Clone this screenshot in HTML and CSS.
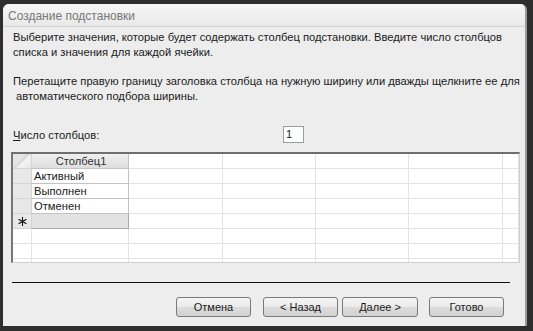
FILE: index.html
```html
<!DOCTYPE html>
<html lang="ru">
<head>
    <meta charset="UTF-8">
    <title>Создание подстановки</title>
    <link rel="stylesheet" href="styles.css">
</head>
<body>
    <div class="window">
        <div class="titlebar">Создание подстановки</div>
        <div class="content">
            <p class="intro">Выберите значения, которые будет содержать столбец подстановки. Введите число столбцов<br>списка и значения для каждой ячейки.</p>
            <p class="intro second">Перетащите правую границу заголовка столбца на нужную ширину или дважды щелкните ее для<br>&nbsp;автоматического подбора ширины.</p>

            <div class="count-row">
                <label for="cols"><u>Ч</u>исло столбцов:</label>
                <div class="count-box" id="cols">1</div>
            </div>

            <div class="grid">
                <div class="cell sel corner"></div>
                <div class="cell head">Столбец1</div>
                <div class="cell"></div><div class="cell"></div><div class="cell"></div><div class="cell"></div><div class="cell"></div>

                <div class="cell sel"></div>
                <div class="cell val">Активный</div>
                <div class="cell"></div><div class="cell"></div><div class="cell"></div><div class="cell"></div><div class="cell"></div>

                <div class="cell sel"></div>
                <div class="cell val">Выполнен</div>
                <div class="cell"></div><div class="cell"></div><div class="cell"></div><div class="cell"></div><div class="cell"></div>

                <div class="cell sel"></div>
                <div class="cell val">Отменен</div>
                <div class="cell"></div><div class="cell"></div><div class="cell"></div><div class="cell"></div><div class="cell"></div>

                <div class="cell sel star">
                    <svg width="9" height="9" viewBox="0 0 9 9"><g stroke="#111" stroke-width="1.1"><line x1="4.5" y1="0" x2="4.5" y2="9"/><line x1="0.6" y1="2.2" x2="8.4" y2="6.8"/><line x1="0.6" y1="6.8" x2="8.4" y2="2.2"/></g></svg>
                </div>
                <div class="cell val newrow"></div>
                <div class="cell"></div><div class="cell"></div><div class="cell"></div><div class="cell"></div><div class="cell"></div>

                <div class="cell"></div><div class="cell"></div><div class="cell"></div><div class="cell"></div><div class="cell"></div><div class="cell"></div><div class="cell"></div>
                <div class="cell"></div><div class="cell"></div><div class="cell"></div><div class="cell"></div><div class="cell"></div><div class="cell"></div><div class="cell"></div>
                <div class="cell"></div><div class="cell"></div><div class="cell"></div><div class="cell"></div><div class="cell"></div><div class="cell"></div><div class="cell"></div>
            </div>

            <div class="sep"></div>

            <div class="buttons">
                <button class="cancel">Отмена</button>
                <button>&lt; Назад</button>
                <button class="next">Далее &gt;</button>
                <button class="done">Готово</button>
            </div>
        </div>
    </div>
</body>
</html>
```

FILE: styles.css
```css
body {
    margin: 0;
    background-color: #2e2e2e;
    font-family: 'Liberation Sans', Arial, sans-serif;
    font-size: 11.2px;
    color: #1a1a1a;
}

.window {
    margin: 4px 0 0 3px;
    width: 524px;
    height: 322px;
    background-color: #ededed;
    border-radius: 6px 6px 0 0;
    box-sizing: border-box;
    border-right: 2px solid #9a9a9a;
    overflow: hidden;
}

.titlebar {
    height: 22px;
    line-height: 24px;
    padding-left: 5px;
    font-size: 12px;
    color: #777;
    background: linear-gradient(#f6f6f6, #e9e9e9);
    border-bottom: 1px solid #d2d2d2;
}

.content {
    padding: 0 0 0 8px;
}

.intro {
    margin: 3px 0 0 2px;
    line-height: 15px;
    white-space: nowrap;
}

.intro.second {
    margin-top: 14px;
}

.count-row {
    display: flex;
    align-items: center;
    margin-top: 22px;
    height: 17px;
    padding-left: 2px;
}

.count-row label {
    width: 270px;
}

.count-box {
    width: 17px;
    height: 15px;
    line-height: 15px;
    padding-left: 2px;
    background-color: #fff;
    border: 1px solid #9c9c9c;
}

.grid {
    margin-top: 9px;
    width: 509px;
    height: 111px;
    box-sizing: border-box;
    display: grid;
    grid-template-columns: 19px 97px 94px 93px 93px 94px 1fr;
    grid-auto-rows: 15px;
    background-color: #fff;
    border-top: 2px solid #6f6f6f;
    border-left: 2px solid #777;
    border-right: 1px solid #cfcfcf;
    border-bottom: 1px solid #cfcfcf;
    overflow: hidden;
}

.cell {
    border-right: 1px solid #e3e3e3;
    border-bottom: 1px solid #e3e3e3;
    line-height: 14px;
    padding-left: 2px;
    white-space: nowrap;
    overflow: hidden;
}

.sel {
    background-color: #e8e8e8;
    border-color: #d4d4d4;
}

.corner {
    background: linear-gradient(135deg, #e4e4e4 45%, #d2d2d2 46%, #f4f4f4 60%, #e6e6e6 100%);
}

.head {
    text-align: center;
    color: #333;
    background: linear-gradient(#efefef, #dedede);
    border-color: #c4c4c4;
}

.val {
    border-color: #c2c2c2;
}

.newrow {
    background-color: #e2e2e2;
    border-color: #a8a8a8;
}

.star {
    display: flex;
    align-items: center;
    justify-content: center;
    padding-left: 0;
}

.sep {
    margin-top: 19px;
    width: 498px;
    height: 1px;
    margin-left: 1px;
    background-color: #111;
}

.buttons {
    display: flex;
    margin-top: 14px;
    padding-left: 165px;
}

button {
    width: 75px;
    height: 20px;
    padding: 0;
    font-family: 'Liberation Sans', Arial, sans-serif;
    font-size: 11px;
    color: #1a1a1a;
    background: linear-gradient(#f4f4f4 0%, #ebebeb 50%, #dcdcdc 51%, #d2d2d2 100%);
    border: 1px solid #7a7a7a;
    border-radius: 3px;
}

button.cancel {
    margin-right: 12px;
}

button.next {
    margin-left: 4px;
    margin-right: 11px;
    width: 76px;
}
```
